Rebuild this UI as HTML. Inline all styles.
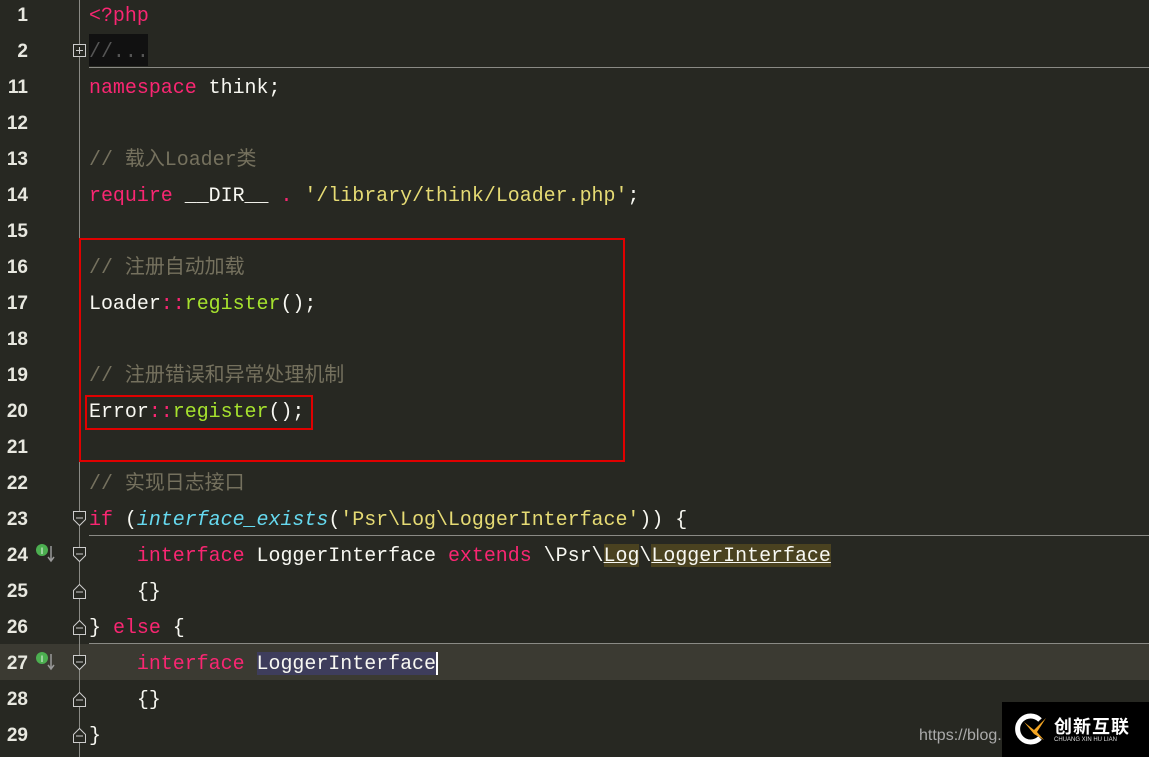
<!DOCTYPE html>
<html><head><meta charset="utf-8"><style>
body{margin:0;width:1149px;height:757px;background:#272822;overflow:hidden;position:relative;font-family:"Liberation Mono","Noto Sans CJK SC",monospace;font-size:19.95px;}
.ln{position:absolute;left:0;width:28px;text-align:right;color:#e8e8e0;font-family:"Liberation Sans",sans-serif;font-weight:bold;font-size:19px;line-height:36px}
.code{position:absolute;left:89px;white-space:pre;color:#f8f8f2;line-height:36px}
.k{color:#f92672}.c{color:#75715e;font-family:"Liberation Mono","Noto Sans CJK SC",monospace}.s{color:#e6db74}.f{color:#a6e22e}.i{color:#66d9ef;font-style:italic}
.hl{background:#4a4220;text-decoration:underline}
.sep{position:absolute;left:89px;right:0;height:1px;background:#8a8a85}
</style></head><body>
<div style="position:absolute;left:0;right:0;top:644px;height:36px;background:#3b3a32"></div>
<div style="position:absolute;left:79px;top:0;width:1px;height:757px;background:#8a8a85"></div>
<div class="sep" style="top:67px"></div>
<div class="sep" style="top:535px"></div>
<div class="sep" style="top:643px"></div>
<div style="position:absolute;left:89px;top:34px;width:59px;height:32px;background:#111"></div>

<div class="ln" style="top:-2px">1</div>
<div class="ln" style="top:34px">2</div>
<div class="ln" style="top:70px">11</div>
<div class="ln" style="top:106px">12</div>
<div class="ln" style="top:142px">13</div>
<div class="ln" style="top:178px">14</div>
<div class="ln" style="top:214px">15</div>
<div class="ln" style="top:250px">16</div>
<div class="ln" style="top:286px">17</div>
<div class="ln" style="top:322px">18</div>
<div class="ln" style="top:358px">19</div>
<div class="ln" style="top:394px">20</div>
<div class="ln" style="top:430px">21</div>
<div class="ln" style="top:466px">22</div>
<div class="ln" style="top:502px">23</div>
<div class="ln" style="top:538px">24</div>
<div class="ln" style="top:574px">25</div>
<div class="ln" style="top:610px">26</div>
<div class="ln" style="top:646px">27</div>
<div class="ln" style="top:682px">28</div>
<div class="ln" style="top:718px">29</div>

<div class="code" style="top:-2px"><span class="k">&lt;?php</span>
<span class="c" style="color:#555">//...</span>
<span class="k">namespace</span> think;

<span class="c">// 载入Loader类</span>
<span class="k">require</span> __DIR__ <span class="k">.</span> <span class="s">'/library/think/Loader.php'</span>;

<span class="c">// 注册自动加载</span>
Loader<span class="k">::</span><span class="f">register</span>();

<span class="c">// 注册错误和异常处理机制</span>
Error<span class="k">::</span><span class="f">register</span>();

<span class="c">// 实现日志接口</span>
<span class="k">if</span> (<span class="i">interface_exists</span>(<span class="s">'Psr\Log\LoggerInterface'</span>)) {
    <span class="k">interface</span> LoggerInterface <span class="k">extends</span> \Psr\<span class="hl">Log</span>\<span class="hl">LoggerInterface</span>
    {}
} <span class="k">else</span> {
    <span class="k">interface</span> <span style="background:#3e3d5c">LoggerInterface</span><span style="border-left:2px solid #fff"></span>
    {}
}</div>

<svg style="position:absolute;left:0;top:0" width="100" height="757">
<rect x="73.5" y="44.5" width="12" height="12" fill="#272822" stroke="#ccc"/><path d="M76 50.5h7M79.5 47v7" stroke="#ccc"/>
<g fill="#272822" stroke="#ccc" stroke-width="1">
<path d="M73.5 511.5h12v8l-6 6l-6-6z"/><path d="M76 518h7"/>
<path d="M73.5 547.5h12v8l-6 6l-6-6z"/><path d="M76 554h7"/>
<path d="M73.5 598.5h12v-8l-6-6l-6 6z"/><path d="M76 592h7"/>
<path d="M73.5 634.5h12v-8l-6-6l-6 6z"/><path d="M76 628h7"/>
<path d="M73.5 655.5h12v8l-6 6l-6-6z"/><path d="M76 662h7"/>
<path d="M73.5 706.5h12v-8l-6-6l-6 6z"/><path d="M76 700h7"/>
<path d="M73.5 742.5h12v-8l-6-6l-6 6z"/><path d="M76 736h7"/>
</g>
<g><circle cx="42" cy="550" r="6" fill="#4caf50"/><text x="42" y="554" font-size="9" text-anchor="middle" fill="#fff" font-family="Liberation Sans">I</text><path d="M51 546v14M48 557l3 4l3-4" stroke="#999" fill="none" stroke-width="1.5"/></g>
<g><circle cx="42" cy="658" r="6" fill="#4caf50"/><text x="42" y="662" font-size="9" text-anchor="middle" fill="#fff" font-family="Liberation Sans">I</text><path d="M51 654v14M48 665l3 4l3-4" stroke="#999" fill="none" stroke-width="1.5"/></g>
</svg>

<div style="position:absolute;left:79px;top:238px;width:542px;height:220px;border:2px solid #e00000"></div>
<div style="position:absolute;left:85px;top:395px;width:224px;height:31px;border:2px solid #e00000"></div>

<div style="position:absolute;left:919px;top:727px;color:#aaa;font-family:'Liberation Sans',sans-serif;font-size:16px">https://blog.c</div>
<div style="position:absolute;left:1002px;top:702px;width:147px;height:55px;background:#000">
<svg style="position:absolute;left:12px;top:10px" width="36" height="34"><path d="M26 8A13 13 0 1 0 26 26" stroke="#fff" stroke-width="5" fill="none"/><path d="M10 10l10 8l12-12l-9 14l7 8l-10-6z" fill="#f5a623"/></svg>
<div style="position:absolute;left:52px;top:11px;color:#fff;font-family:'Noto Sans CJK SC',sans-serif;font-size:18px;font-weight:bold;letter-spacing:1px">创新互联</div>
<div style="position:absolute;left:52px;top:35px;color:#ddd;font-family:'Liberation Sans',sans-serif;font-size:6px">CHUANG XIN HU LIAN</div>
</div>
</body></html>
